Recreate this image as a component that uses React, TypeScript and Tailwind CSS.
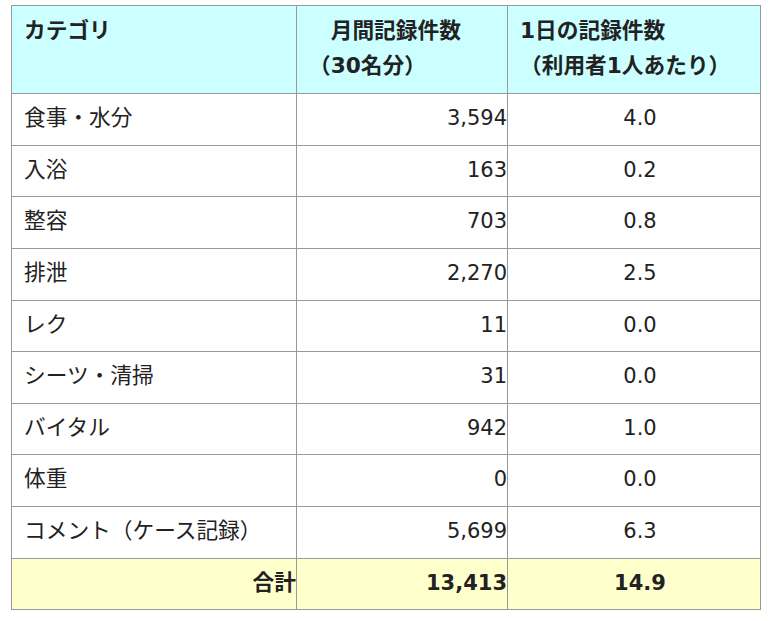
import React from "react";

const rows = [
  { name: "食事・水分", monthly: "3,594", daily: "4.0" },
  { name: "入浴", monthly: "163", daily: "0.2" },
  { name: "整容", monthly: "703", daily: "0.8" },
  { name: "排泄", monthly: "2,270", daily: "2.5" },
  { name: "レク", monthly: "11", daily: "0.0" },
  { name: "シーツ・清掃", monthly: "31", daily: "0.0" },
  { name: "バイタル", monthly: "942", daily: "1.0" },
  { name: "体重", monthly: "0", daily: "0.0" },
  { name: "コメント（ケース記録）", monthly: "5,699", daily: "6.3" },
];

const cell = "border-r border-b border-[#999999] pt-[7px] pb-[9px]";

export default function App() {
  return (
    <div
      className="pl-[11px] pt-[5px] text-[21px] leading-[34.6px] text-[#222222]"
      style={{ fontFamily: '"DejaVu Sans", "Noto Sans CJK JP", sans-serif' }}
    >
      <div className="grid w-[750px] grid-cols-[285px_211px_253px] border-l border-t border-[#999999]">
        {/* header */}
        <div className="border-r border-b border-[#999999] bg-[#ccffff] pt-[8px] pb-[10px] pl-3 text-[21.7px] font-bold">
          カテゴリ
        </div>
        <div className="border-r border-b border-[#999999] bg-[#ccffff] pt-[8px] pb-[10px] pl-3 text-[21.7px] font-bold">
          <div>　月間記録件数</div>
          <div>（30名分）</div>
        </div>
        <div className="border-r border-b border-[#999999] bg-[#ccffff] pt-[8px] pb-[10px] pl-3 text-[21.7px] font-bold">
          <div>1日の記録件数</div>
          <div>（利用者1人あたり）</div>
        </div>

        {rows.map((r) => (
          <React.Fragment key={r.name}>
            <div className={`${cell} pl-3 text-[21.7px]`}>{r.name}</div>
            <div className={`${cell} pl-3 text-right`}>{r.monthly}</div>
            <div className={`${cell} pl-3 text-center`}>{r.daily}</div>
          </React.Fragment>
        ))}

        {/* total */}
        <div className={`${cell} bg-[#ffffcc] pl-3 text-right text-[21.7px] font-bold`}>合計</div>
        <div className={`${cell} bg-[#ffffcc] pl-3 text-right font-bold`}>13,413</div>
        <div className={`${cell} bg-[#ffffcc] pl-3 text-center font-bold`}>14.9</div>
      </div>
    </div>
  );
}
